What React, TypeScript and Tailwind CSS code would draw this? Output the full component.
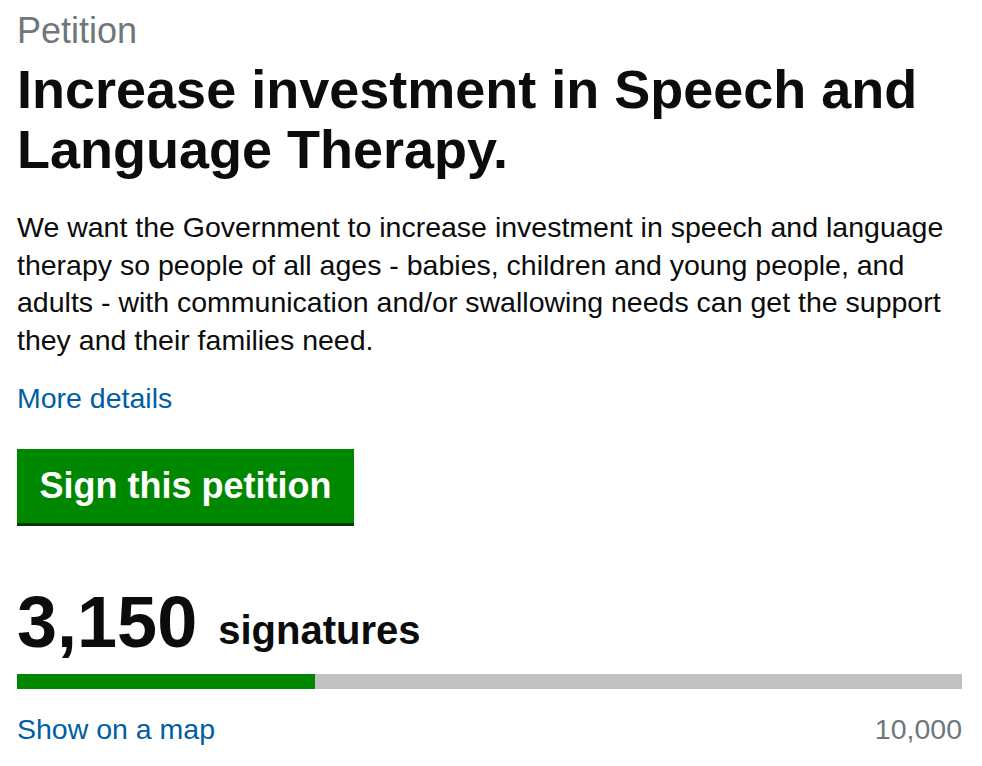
import React from "react";

export default function App() {
  const count = 3150;
  const target = 10000;
  const pct = (count / target) * 100;
  return (
    <div
      className="bg-white min-h-[766px] pl-[17px] pr-[20px] pt-[8px] text-[#0b0c0c]"
      style={{ fontFamily: '"Liberation Sans", Arial, sans-serif' }}
    >
      <div className="text-[36px] leading-[45px] text-[#6f777b]">Petition</div>
      <h1 className="mt-[6px] text-[54px] leading-[60px] font-bold">
        Increase investment in Speech and Language Therapy.
      </h1>
      <p className="mt-[30px] text-[28.5px] leading-[37.5px]">
        We want the Government to increase investment in speech and language therapy so people of
        all ages - babies, children and young people, and adults - with communication and/or
        swallowing needs can get the support they and their families need.
      </p>
      <div className="mt-[21px] text-[28.5px] leading-[37.5px]">
        <a href="#" className="text-[#005ea5]">More details</a>
      </div>
      <div className="mt-[31px]">
        <button className="bg-[#008700] text-white font-bold text-[36px] leading-[45px] px-[22.5px] py-[14.5px] shadow-[0_3px_0_#003a00]">
          Sign this petition
        </button>
      </div>
      <div className="mt-[63px] flex items-end font-bold">
        <span className="text-[72px] leading-[72px]">3,150</span>
        <span className="ml-[21px] text-[40px] leading-[56px]">signatures</span>
      </div>
      <div className="mt-[16px] h-[15px] bg-[#bfc1c3]">
        <div className="h-full bg-[#008700]" style={{ width: `${pct}%` }} />
      </div>
      <div className="mt-[22px] flex justify-between text-[28.5px] leading-[37.5px]">
        <a href="#" className="text-[#005ea5]">Show on a map</a>
        <span className="text-[#6f777b]">10,000</span>
      </div>
    </div>
  );
}
